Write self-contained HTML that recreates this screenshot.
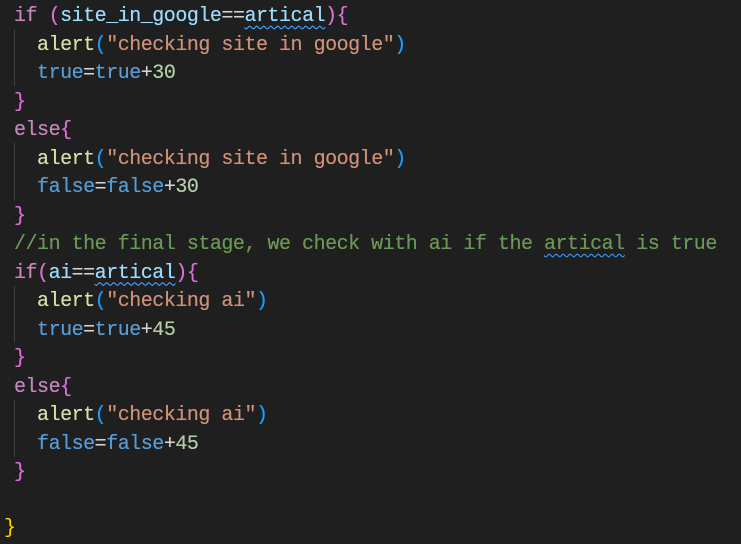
<!DOCTYPE html>
<html><head><meta charset="utf-8"><style>
html,body{margin:0;padding:0;background:#1f1f1f;width:741px;height:544px;overflow:hidden}
pre{position:absolute;left:14px;top:3px;margin:0;font-family:"Liberation Mono",monospace;font-size:20px;letter-spacing:-0.48px;line-height:28.5px;color:#d4d4d4;white-space:pre;text-shadow:0 0 0.4px currentColor}
.k{color:#c586c0}.v{color:#9cdcfe}.f{color:#dcdcaa}.s{color:#ce9178}.b{color:#569cd6}.n{color:#b5cea8}.c{color:#6a9955}
.p{color:#da70d6}.q{color:#179fff}.y{color:#ffd700}
.w{text-decoration:underline wavy #3794ff;text-decoration-thickness:1px;text-underline-offset:4px}
.g{position:absolute;left:14px;width:1px;background:#404040}
.last{position:absolute;left:4px;top:515px;font-family:"Liberation Mono",monospace;font-size:20px;line-height:28.5px}
</style></head><body>
<div class="g" style="top:29px;height:57px"></div>
<div class="g" style="top:143px;height:57px"></div>
<div class="g" style="top:286px;height:57px"></div>
<div class="g" style="top:400px;height:57px"></div>
<pre><span class="k">if</span> <span class="p">(</span><span class="v">site_in_google</span>==<span class="v w">artical</span><span class="p">){</span>
  <span class="f">alert</span><span class="q">(</span><span class="s">"checking site in google"</span><span class="q">)</span>
  <span class="b">true</span>=<span class="b">true</span>+<span class="n">30</span>
<span class="p">}</span>
<span class="k">else</span><span class="p">{</span>
  <span class="f">alert</span><span class="q">(</span><span class="s">"checking site in google"</span><span class="q">)</span>
  <span class="b">false</span>=<span class="b">false</span>+<span class="n">30</span>
<span class="p">}</span>
<span class="c">//in the final stage, we check with ai if the <span class="w">artical</span> is true</span>
<span class="k">if</span><span class="p">(</span><span class="v">ai</span>==<span class="v w">artical</span><span class="p">){</span>
  <span class="f">alert</span><span class="q">(</span><span class="s">"checking ai"</span><span class="q">)</span>
  <span class="b">true</span>=<span class="b">true</span>+<span class="n">45</span>
<span class="p">}</span>
<span class="k">else</span><span class="p">{</span>
  <span class="f">alert</span><span class="q">(</span><span class="s">"checking ai"</span><span class="q">)</span>
  <span class="b">false</span>=<span class="b">false</span>+<span class="n">45</span>
<span class="p">}</span></pre>
<div class="last"><span class="y">}</span></div>
</body></html>
